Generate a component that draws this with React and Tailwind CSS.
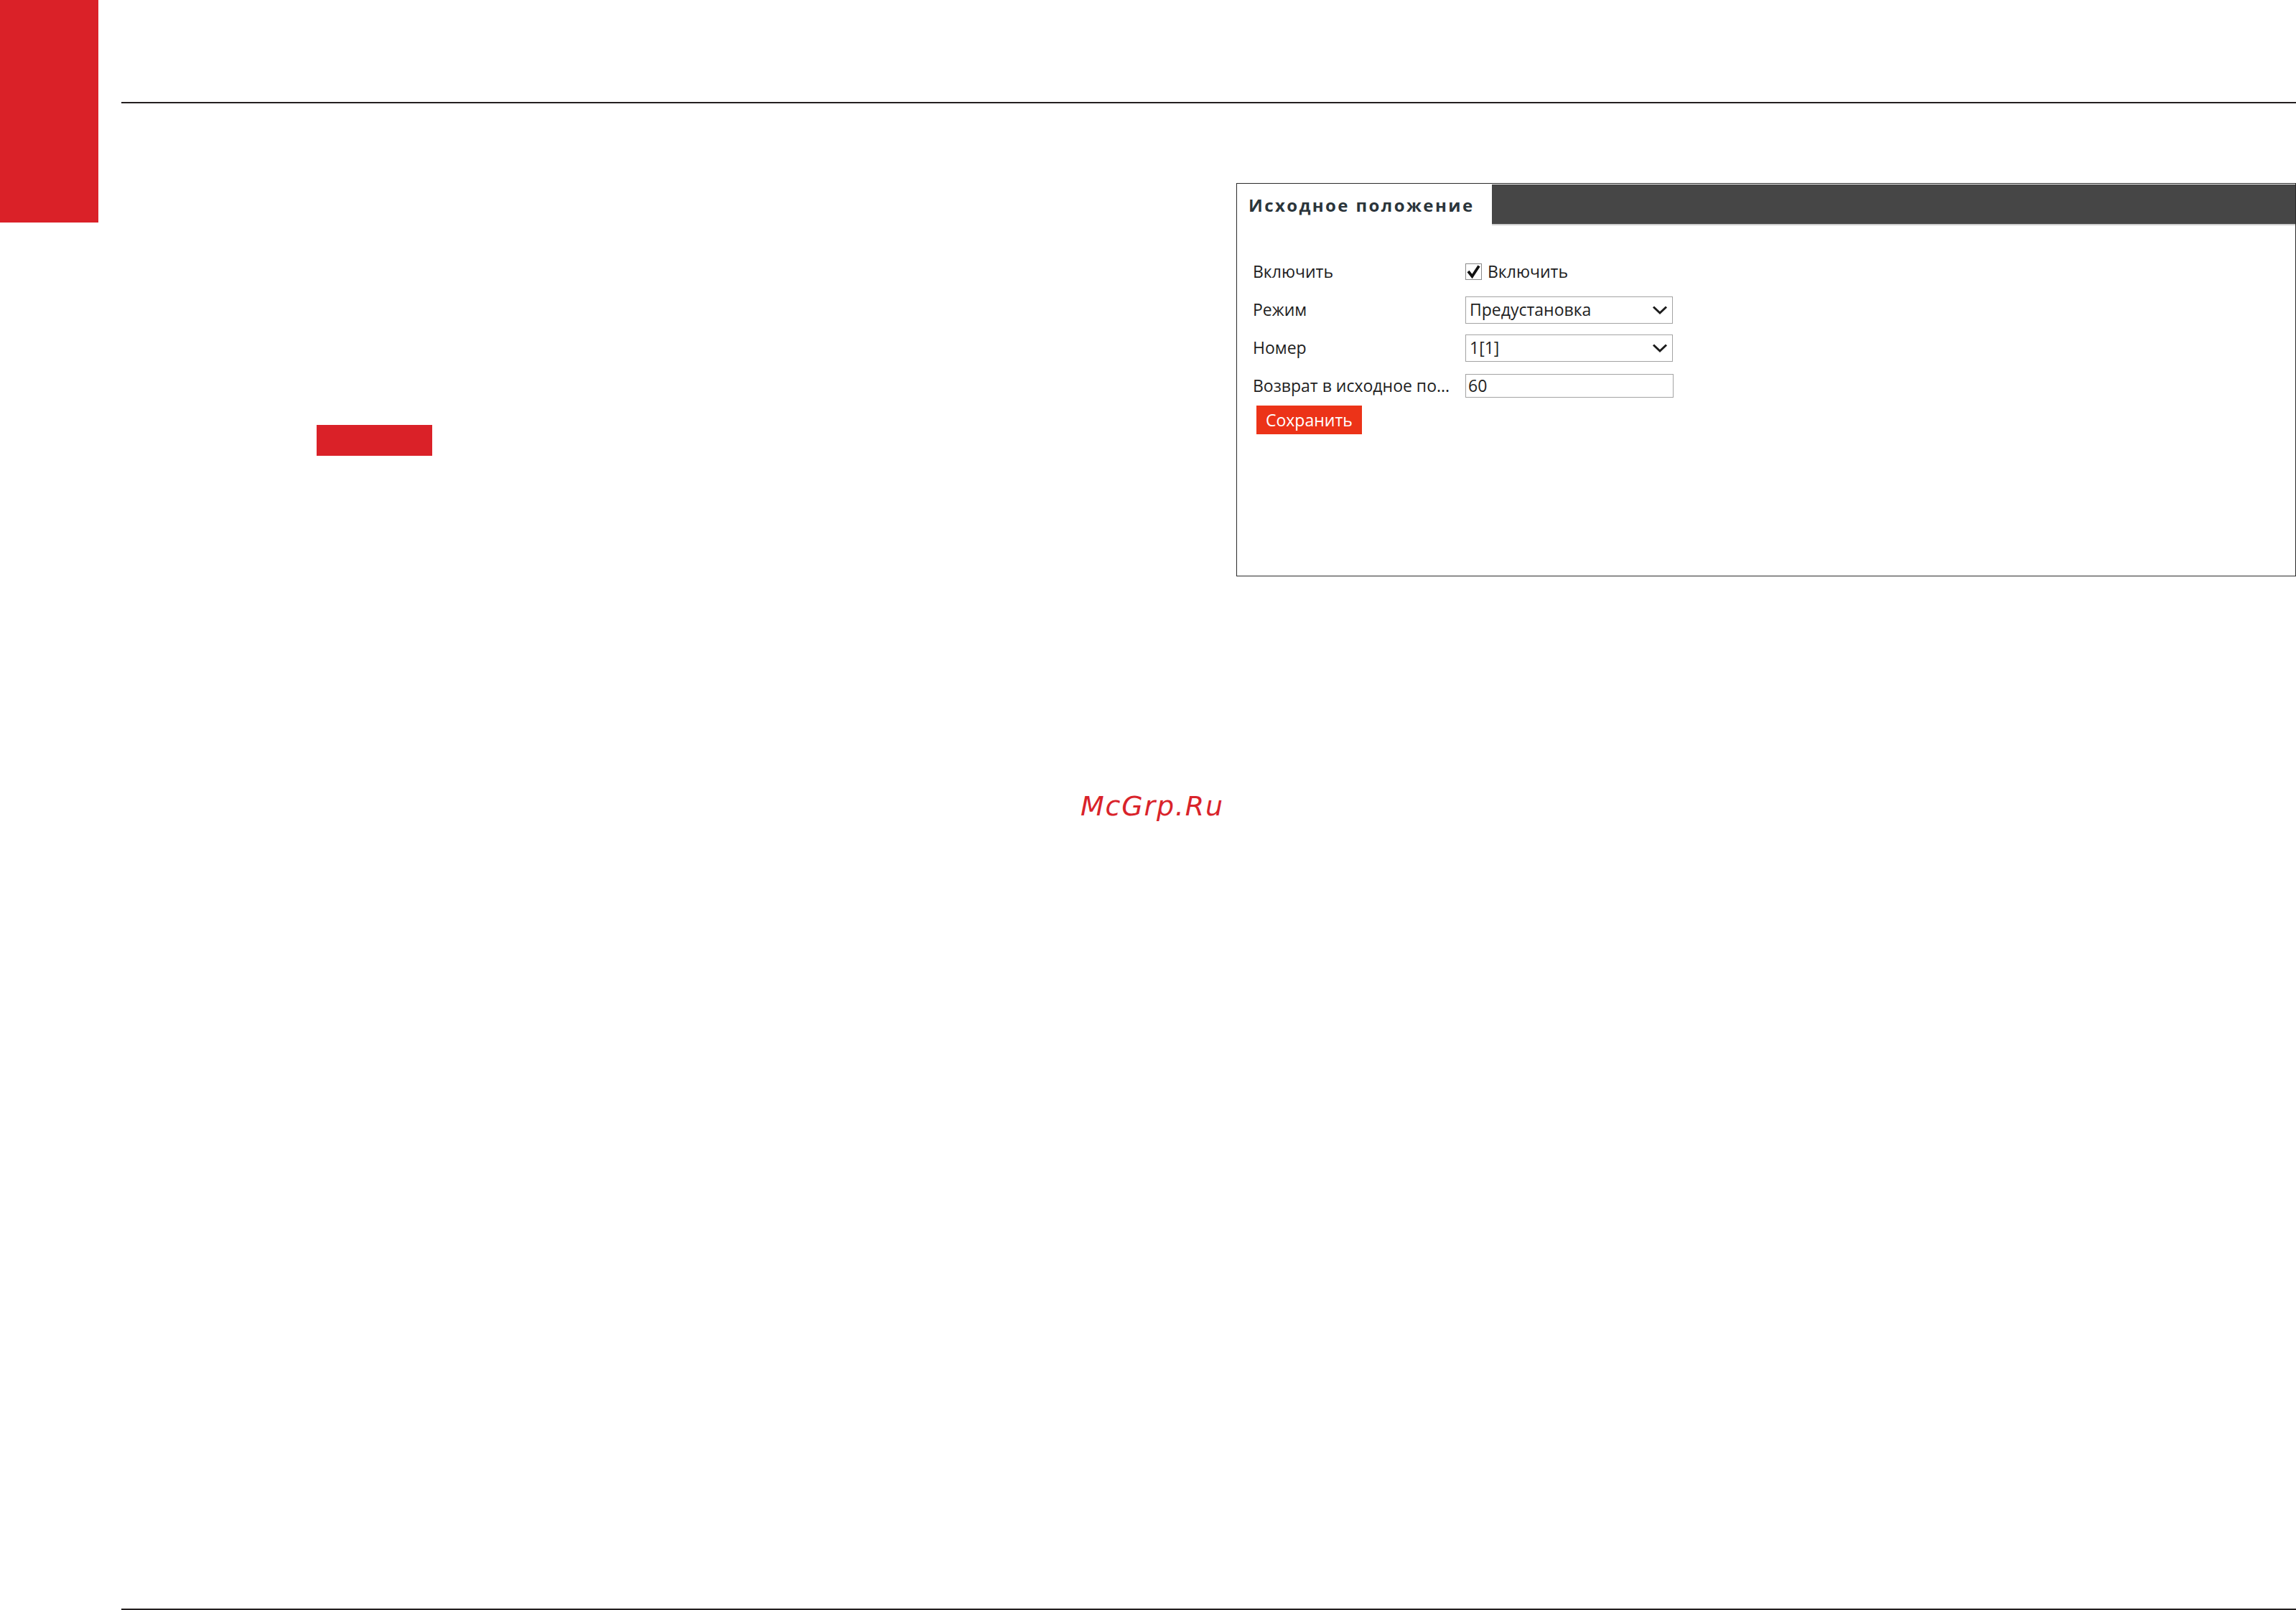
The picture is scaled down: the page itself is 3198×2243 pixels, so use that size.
import React from 'react';

const labelFont = { fontFamily: '"Open Sans", "Liberation Sans", sans-serif' };

function Chevron() {
  return (
    <svg width="22" height="14" viewBox="0 0 22 14" className="shrink-0">
      <polyline points="2,2.5 11,11 20,2.5" fill="none" stroke="#1c1c1c" strokeWidth="3" />
    </svg>
  );
}

function SelectBox({ value }) {
  return (
    <div className="flex items-center justify-between w-[289px] h-[38px] border-[1.5px] border-[#a3a3a3] bg-white pl-[5px] pr-[6px]">
      <span className="text-[23px] leading-none text-[#1e1e1e]">{value}</span>
      <Chevron />
    </div>
  );
}

function Row({ label, children }) {
  return (
    <div className="flex items-center h-[53px]">
      <div className="w-[296px] shrink-0 text-[23px] leading-none text-[#1e1e1e] whitespace-nowrap">{label}</div>
      {children}
    </div>
  );
}

function HomePanel() {
  return (
    <div className="w-[1476px] h-[548px] border-[1.5px] border-[#2a2a2a] bg-white" style={labelFont}>
      <div className="flex pt-[1px]">
        <div className="w-[355px] h-[57px] flex items-center pl-[16px]">
          <span className="text-[24px] font-bold tracking-[2.4px] text-[#2b353b]">
            Исходное положение
          </span>
        </div>
        <div className="flex-1 h-[57px] bg-[#464646] border-b-2 border-[#cfcfcf]" />
      </div>
      <div className="pl-[22px] pt-[38px]">
        <Row label="Включить">
          <div className="flex items-center gap-[8px]">
            <div className="w-[23px] h-[23px] border-[1.5px] border-[#8a8a8a] bg-white flex items-center justify-center">
              <svg width="21" height="21" viewBox="0 0 21 21">
                <polyline points="3,10 8.5,17 18,2.5" fill="none" stroke="#111" strokeWidth="3.8" />
              </svg>
            </div>
            <span className="text-[23px] leading-none text-[#1e1e1e]">Включить</span>
          </div>
        </Row>
        <Row label="Режим">
          <SelectBox value="Предустановка" />
        </Row>
        <Row label="Номер">
          <SelectBox value="1[1]" />
        </Row>
        <Row label="Возврат в исходное по...">
          <div className="w-[290px] h-[33px] border-[1.5px] border-[#a3a3a3] bg-white pl-[3px] flex items-center">
            <span className="text-[23px] leading-none text-[#1e1e1e]">60</span>
          </div>
        </Row>
        <button className="ml-[5px] mt-[1px] h-[40px] px-[13px] bg-[#ec3318] text-white text-[23px] leading-none">
          Сохранить
        </button>
      </div>
    </div>
  );
}

export default function App() {
  return (
    <div className="relative w-[3198px] h-[2243px] bg-white flex overflow-hidden">
      <div className="w-[137px] h-[310px] bg-[#da2128] shrink-0" />
      <div className="ml-[32px] flex-1 flex flex-col">
        <div className="h-[144px] border-b-2 border-[#231f20] shrink-0" />
        <div className="flex items-start pt-[111px]">
          <div className="w-[1553px] shrink-0 pt-[337px] pl-[272px]">
            <div className="w-[161px] h-[43px] bg-[#da2128]" />
          </div>
          <HomePanel />
        </div>
        <div className="mt-auto h-[2px] bg-[#231f20]" />
      </div>
      <div
        className="absolute left-[1505px] top-[1095px] text-[38px] italic tracking-[1.8px] text-[#d9232a]"
        style={{ fontFamily: '"DejaVu Sans", sans-serif' }}
      >
        McGrp.Ru
      </div>
    </div>
  );
}
